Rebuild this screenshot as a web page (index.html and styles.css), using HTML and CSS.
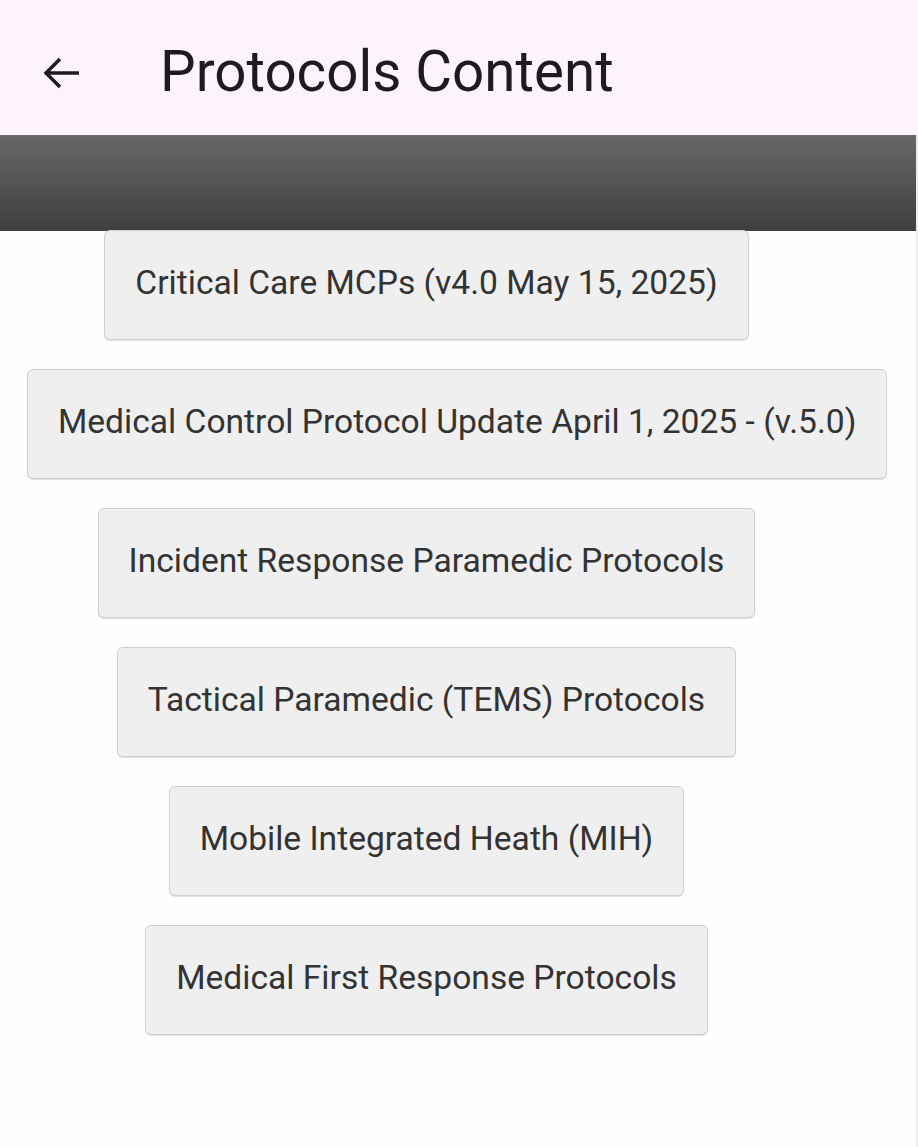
FILE: index.html
```html
<!DOCTYPE html>
<html>
<head>
<meta charset="utf-8">
<link rel="stylesheet" href="styles.css">
</head>
<body>
<div class="app">
  <header class="appbar">
    <svg class="back" width="40" height="40" viewBox="0 0 40 40" aria-hidden="true">
      <path d="M38 20 H5 M19 6 L5 20 L19 34" fill="none" stroke="#1d1b20" stroke-width="3.4" stroke-linecap="butt" stroke-linejoin="miter"/>
    </svg>
    <h1 class="title">Protocols Content</h1>
  </header>
  <div class="banner"></div>
  <main class="list">
    <button class="item">Critical Care MCPs (v4.0 May 15, 2025)</button>
    <button class="item item-wide">Medical Control Protocol Update April 1, 2025 - (v.5.0)</button>
    <button class="item">Incident Response Paramedic Protocols</button>
    <button class="item">Tactical Paramedic (TEMS) Protocols</button>
    <button class="item">Mobile Integrated Heath (MIH)</button>
    <button class="item">Medical First Response Protocols</button>
  </main>
</div>
</body>
</html>
```

FILE: styles.css
```css
html, body {
  margin: 0;
  padding: 0;
  background: #fefefe;
}
body {
  font-family: Roboto, "Noto Sans", sans-serif;
  width: 918px;
  height: 1147px;
  overflow: hidden;
}
.app {
  width: 916px;
  min-height: 1147px;
  border-right: 2px solid #ececec;
  background: #fefefe;
}
.appbar {
  height: 135px;
  background: #fdf3fc;
  display: flex;
  align-items: center;
  width: 918px;
}
.back {
  margin-left: 41px;
  margin-top: 10px;
  flex: none;
}
.title {
  margin: 8px 0 0 79px;
  font-family: Roboto, sans-serif;
  font-weight: 400;
  font-size: 56.5px;
  color: #1d1b20;
}
.banner {
  height: 96px;
  background: linear-gradient(to bottom, #686868 0%, #555 45%, #3f3f3f 100%);
}
.list {
  width: 853px;
  margin-top: -1px;
  display: flex;
  flex-direction: column;
  align-items: center;
  gap: 29px;
}
.item {
  height: 110px;
  padding: 0 30px 5px;
  background: #efefef;
  border: 1px solid #cfcfcf;
  border-radius: 6px;
  box-shadow: 0 1px 1px rgba(0,0,0,0.12);
  font-family: Roboto, sans-serif;
  font-size: 33.6px;
  color: #333;
  white-space: nowrap;
}
.item-wide {
  align-self: flex-start;
  margin-left: 27px;
}
```
